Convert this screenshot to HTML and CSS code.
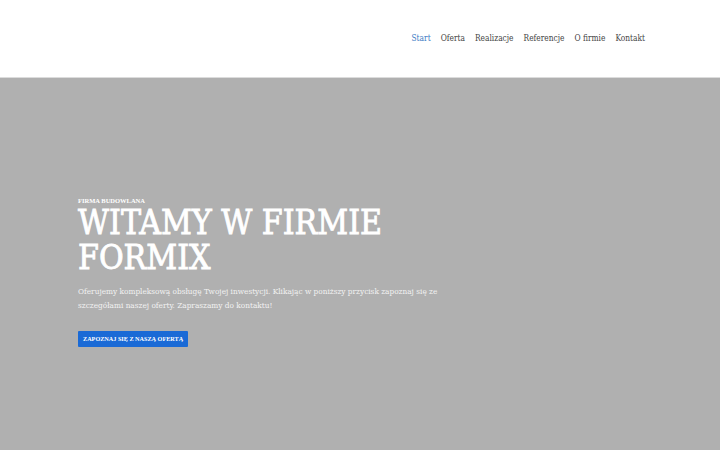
FILE: index.html
```html
<!DOCTYPE html>
<html lang="pl">
<head>
<meta charset="utf-8">
<title>Formix</title>
<link rel="stylesheet" href="styles.css">
</head>
<body>
<header class="header">
  <nav class="nav">
    <a class="nav-link active" href="#">Start</a>
    <a class="nav-link" href="#">Oferta</a>
    <a class="nav-link" href="#">Realizacje</a>
    <a class="nav-link" href="#">Referencje</a>
    <a class="nav-link" href="#">O firmie</a>
    <a class="nav-link" href="#">Kontakt</a>
  </nav>
</header>
<section class="hero">
  <div class="hero-content">
    <p class="eyebrow">FIRMA BUDOWLANA</p>
    <h1 class="title">WITAMY W FIRMIE FORMIX</h1>
    <p class="lead">Oferujemy kompleksową obsługę Twojej inwestycji. Klikając w poniższy przycisk zapoznaj się ze szczegółami naszej oferty. Zapraszamy do kontaktu!</p>
    <a class="btn" href="#">ZAPOZNAJ SIĘ Z NASZĄ OFERTĄ</a>
  </div>
</section>
</body>
</html>
```
FILE: styles.css
```css
* { box-sizing: border-box; }
html, body { margin: 0; padding: 0; }
body {
  font-family: "DejaVu Serif", "Liberation Serif", serif;
  font-stretch: condensed;
  width: 720px;
  height: 450px;
  overflow: hidden;
  background: #b0b0b0;
}
.header {
  height: 78px;
  background: #fff;
  border-bottom: 1px solid #dcdcdc;
  display: flex;
  justify-content: flex-end;
  align-items: flex-start;
  padding: 32px 75px 0 78px;
}
.nav {
  display: flex;
  gap: 10px;
}
.nav-link {
  font-size: 8.3px;
  color: #444;
  text-decoration: none;
  line-height: 12px;
}
.nav-link.active { color: #3a7cc4; }
.hero {
  height: 372px;
  background: #b0b0b0;
  padding: 119px 75px 0 78px;
}
.hero-content { width: 400px; }
.eyebrow {
  margin: 0;
  font-family: "Liberation Serif", serif;
  font-size: 6.5px;
  font-weight: bold;
  color: #fff;
  line-height: 8px;
}
.title {
  margin: 0;
  font-size: 33.5px;
  line-height: 35px;
  font-weight: normal;
  -webkit-text-stroke: 0.8px #fff;
  color: #fff;
  width: 340px;
}
.lead {
  margin: 9px 0 0;
  font-size: 8.2px;
  line-height: 14px;
  color: #f2f2f2;
  width: 368px;
}
.btn {
  display: inline-block;
  margin-top: 19px;
  background: #1a6ad6;
  color: #fff;
  font-family: "Liberation Serif", serif;
  font-size: 6.2px;
  font-weight: bold;
  text-decoration: none;
  padding: 0 5px;
  line-height: 16px;
  height: 16px;
  white-space: nowrap;
  border-radius: 1px;
}
```
